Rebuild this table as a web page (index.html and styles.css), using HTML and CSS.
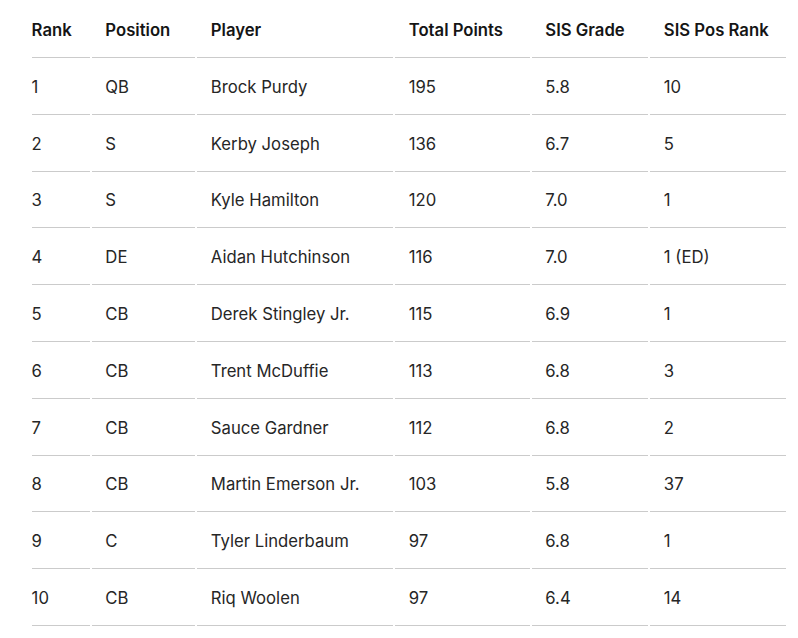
FILE: index.html
```html
<!DOCTYPE html>
<html>
<head>
<meta charset="utf-8">
<link rel="stylesheet" href="styles.css">
</head>
<body>
<table class="rank-table">
  <colgroup>
    <col class="c-rank"><col class="c-pos"><col class="c-player"><col class="c-pts"><col class="c-grade"><col class="c-prank">
  </colgroup>
  <thead>
    <tr><th class="first">Rank</th><th>Position</th><th>Player</th><th>Total Points</th><th>SIS Grade</th><th>SIS Pos Rank</th></tr>
  </thead>
  <tbody>
    <tr><td class="first">1</td><td>QB</td><td>Brock Purdy</td><td>195</td><td>5.8</td><td>10</td></tr>
    <tr><td class="first">2</td><td>S</td><td>Kerby Joseph</td><td>136</td><td>6.7</td><td>5</td></tr>
    <tr><td class="first">3</td><td>S</td><td>Kyle Hamilton</td><td>120</td><td>7.0</td><td>1</td></tr>
    <tr><td class="first">4</td><td>DE</td><td>Aidan Hutchinson</td><td>116</td><td>7.0</td><td>1 (ED)</td></tr>
    <tr><td class="first">5</td><td>CB</td><td>Derek Stingley Jr.</td><td>115</td><td>6.9</td><td>1</td></tr>
    <tr><td class="first">6</td><td>CB</td><td>Trent McDuffie</td><td>113</td><td>6.8</td><td>3</td></tr>
    <tr><td class="first">7</td><td>CB</td><td>Sauce Gardner</td><td>112</td><td>6.8</td><td>2</td></tr>
    <tr><td class="first">8</td><td>CB</td><td>Martin Emerson Jr.</td><td>103</td><td>5.8</td><td>37</td></tr>
    <tr><td class="first">9</td><td>C</td><td>Tyler Linderbaum</td><td>97</td><td>6.8</td><td>1</td></tr>
    <tr><td class="first">10</td><td>CB</td><td>Riq Woolen</td><td>97</td><td>6.4</td><td>14</td></tr>
  </tbody>
</table>
</body>
</html>
```
FILE: styles.css
```css
html, body {
  margin: 0;
  padding: 0;
  background: #ffffff;
}
body {
  font-family: Inter, "Noto Sans", "Liberation Sans", sans-serif;
  color: #1c1c1c;
}
.rank-table {
  border-collapse: separate;
  border-spacing: 2.4px 0;
  margin-left: 29.6px;
  table-layout: fixed;
  width: 758.4px;
}
.c-rank { width: 58px; }
.c-pos { width: 103px; }
.c-player { width: 195px; }
.c-pts { width: 134px; }
.c-grade { width: 116px; }
.c-prank { width: 135px; }
.rank-table th,
.rank-table td {
  text-align: left;
  padding: 2px 0 0 13.5px;
  border-bottom: 1px solid #cbcbcb;
  vertical-align: middle;
  white-space: nowrap;
}
.rank-table th {
  height: 55px;
  font-size: 16.7px;
  font-weight: 600;
  color: #151515;
}
.rank-table td {
  height: 53.8px;
  font-size: 16.7px;
  font-weight: 400;
  color: #262626;
}
.rank-table .first {
  padding-left: 0;
}
```
